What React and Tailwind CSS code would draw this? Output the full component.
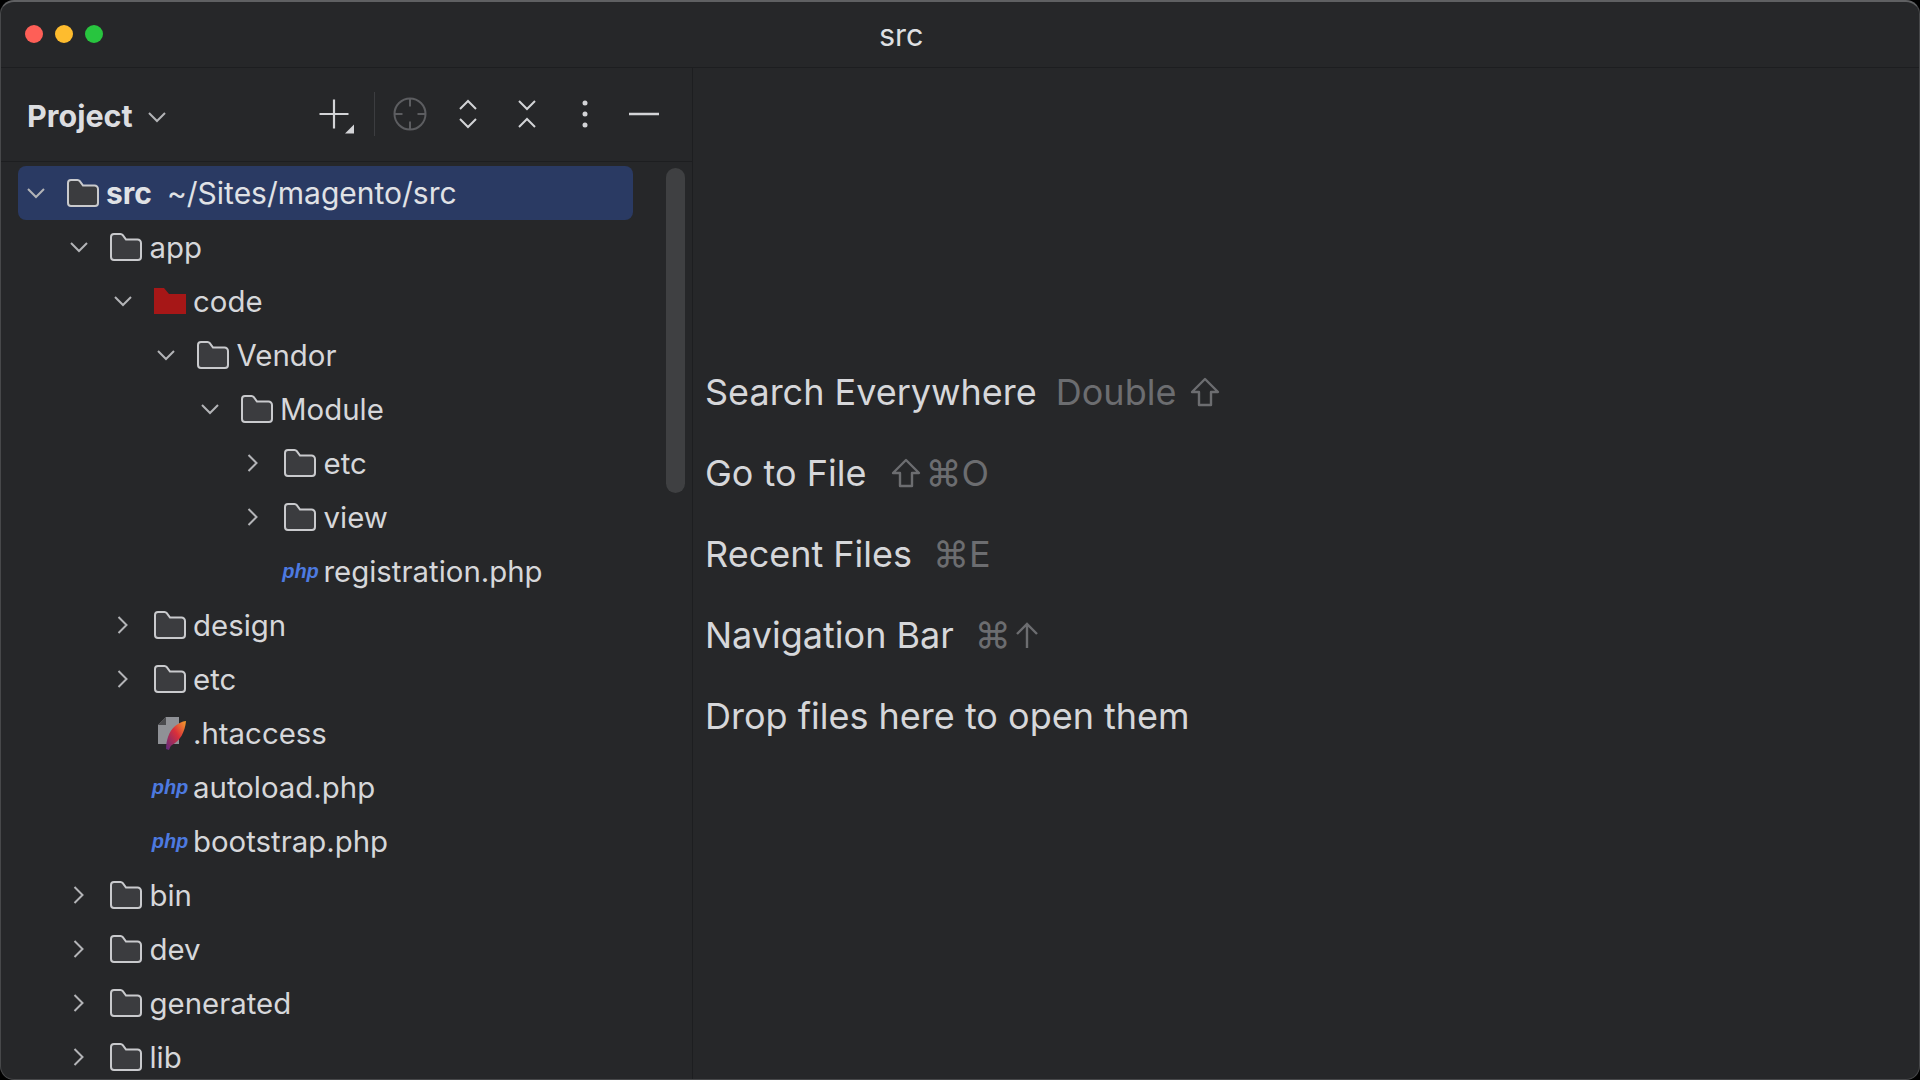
const Chevron = ({ open }) =>
  open ? (
    <svg width="20" height="12" viewBox="0 0 20 12" fill="none" stroke="#b3b4b7" strokeWidth="2">
      <path d="M2 2l8 8 8-8" />
    </svg>
  ) : (
    <svg className="-ml-[2px]" width="12" height="20" viewBox="0 0 12 20" fill="none" stroke="#b3b4b7" strokeWidth="2">
      <path d="M2.5 2l8 8-8 8" />
    </svg>
  );

const Folder = ({ red }) =>
  red ? (
    <svg width="32" height="28" viewBox="0 0 32 28">
      <path d="M0 1h10l5 6h17v20H0z" fill="#a61717" />
    </svg>
  ) : (
    <svg className="-ml-[1px]" width="32" height="28" viewBox="0 0 32 28">
      <path
        d="M4 1h6.5c1 0 1.700.4 2.300 1.200L16 6.500h11.500A3.500 3.500 0 0 1 31 10v14a3 3 0 0 1-3 3H4a3 3 0 0 1-3-3V4a3 3 0 0 1 3-3z"
        fill="#3b3c3f"
        stroke="#c9cacd"
        strokeWidth="2"
      />
    </svg>
  );

const Php = () => (
  <span className="mb-[1px] font-['Liberation_Sans'] text-[20px] leading-none font-bold italic text-[#4d7ae0]">
    php
  </span>
);

const Feather = () => (
  <svg width="32" height="34" viewBox="0 0 32 34">
    <defs>
      <linearGradient id="feather" x1="1" y1="0" x2="0" y2="1">
        <stop offset="0" stopColor="#f4a02c" />
        <stop offset="0.45" stopColor="#d92f3a" />
        <stop offset="1" stopColor="#5d2a82" />
      </linearGradient>
    </defs>
    <path d="M12 1h13v27H4V9z" fill="#8f9196" />
    <path d="M12 1v8H4z" fill="#4a4b4e" />
    <path d="M32 5c-8 1-15 7-18 16-1 3-2 7-2 12l3 1c1-2 1-4 3-5 8-4 13-13 14-24z" fill="url(#feather)" />
  </svg>
);

const depthClass = [
  "pl-0",
  "pl-[43.500px]",
  "pl-[87px]",
  "pl-[130.500px]",
  "pl-[174px]",
  "pl-[217.500px]",
];

const tree = [
  { depth: 0, name: "src", open: true, selected: true },
  { depth: 1, name: "app", open: true },
  { depth: 2, name: "code", open: true, icon: "red" },
  { depth: 3, name: "Vendor", open: true },
  { depth: 4, name: "Module", open: true },
  { depth: 5, name: "etc" },
  { depth: 5, name: "view" },
  { depth: 5, name: "registration.php", icon: "php" },
  { depth: 2, name: "design" },
  { depth: 2, name: "etc" },
  { depth: 2, name: ".htaccess", icon: "apache" },
  { depth: 2, name: "autoload.php", icon: "php" },
  { depth: 2, name: "bootstrap.php", icon: "php" },
  { depth: 1, name: "bin" },
  { depth: 1, name: "dev" },
  { depth: 1, name: "generated" },
  { depth: 1, name: "lib" },
];

const TreeRow = ({ item }) => {
  const isFile = item.icon === "php" || item.icon === "apache";
  return (
    <div
      className={`flex h-[54px] items-center shrink-0 rounded-lg whitespace-nowrap ${depthClass[item.depth]} ${
        item.selected ? "bg-[#2a3a63] text-[30px] text-[#e0e2e6]" : "text-[29.400px] text-[#d6d7da]"
      }`}
    >
      <span className="flex w-[35px] justify-center">{!isFile && <Chevron open={item.open} />}</span>
      <span className="ml-[14px] flex w-[32px] justify-center">
        {item.icon === "php" && <Php />}
        {item.icon === "apache" && <Feather />}
        {!isFile && <Folder red={item.icon === "red"} />}
      </span>
      <span className={`ml-[7px] ${item.selected ? "pt-[1px] font-bold" : "pt-[2px]"}`}>{item.name}</span>
      {item.selected && <span className="ml-[15px] pt-[1px]">~/Sites/magento/src</span>}
    </div>
  );
};

const ToolBtn = ({ children }) => (
  <button className="flex h-[40px] w-[58.500px] items-center justify-center">{children}</button>
);

const Toolbar = () => (
  <div className="flex h-[94px] items-center border-b border-[#1d1e20] pl-[26px] pr-[19px]">
    <span className="mt-[3px] text-[30.500px] font-bold text-[#dcdde0]">Project</span>
    <svg className="ml-[14px] mt-[5px]" width="20" height="12" viewBox="0 0 20 12" fill="none" stroke="#b3b4b7" strokeWidth="2">
      <path d="M2 2l8 8 8-8" />
    </svg>
    <div className="-mt-[2px] ml-auto flex items-center">
      <button className="flex h-[40px] w-[40px] items-center justify-center">
        <svg width="40" height="40" viewBox="0 0 40 40">
          <path d="M5.500 20h29M20 5.500v29" stroke="#d3d4d7" strokeWidth="2.200" fill="none" />
          <path d="M40 30.500v9h-9z" fill="#d3d4d7" />
        </svg>
      </button>
      <span className="ml-[20px] mr-[6px] h-[44px] w-px bg-[#3c3d40]" />
      <ToolBtn>
        <svg width="34" height="34" viewBox="0 0 34 34" fill="none" stroke="#5c5d60" strokeWidth="2">
          <circle cx="17" cy="17" r="15.500" />
          <path d="M17 1.500v8M17 24.500v8M1.500 17h8M24.500 17h8" />
        </svg>
      </ToolBtn>
      <ToolBtn>
        <svg width="20" height="30" viewBox="0 0 20 30" fill="none" stroke="#d3d4d7" strokeWidth="2">
          <path d="M2 10l8-8 8 8M2 20l8 8 8-8" />
        </svg>
      </ToolBtn>
      <ToolBtn>
        <svg width="20" height="30" viewBox="0 0 20 30" fill="none" stroke="#d3d4d7" strokeWidth="2">
          <path d="M2 2l8 8 8-8M2 28l8-8 8 8" />
        </svg>
      </ToolBtn>
      <ToolBtn>
        <svg width="6" height="28" viewBox="0 0 6 28" fill="#d3d4d7">
          <circle cx="3" cy="3" r="2.500" />
          <circle cx="3" cy="14" r="2.500" />
          <circle cx="3" cy="25" r="2.500" />
        </svg>
      </ToolBtn>
      <ToolBtn>
        <svg width="30" height="4" viewBox="0 0 30 4">
          <path d="M0 2h30" stroke="#d3d4d7" strokeWidth="2.400" />
        </svg>
      </ToolBtn>
    </div>
  </div>
);

const ShiftKey = () => (
  <svg className="ml-[4px]" width="30" height="30" viewBox="0 0 30 30" fill="none" stroke="#6c6d70" strokeWidth="2.400" strokeLinejoin="round">
    <path d="M15 2L28 15h-7v13H9V15H2z" />
  </svg>
);

const UpKey = () => (
  <svg width="24" height="28" viewBox="0 0 24 28" fill="none" stroke="#6c6d70" strokeWidth="2.400">
    <path d="M12 27V3M2 13L12 3l10 10" />
  </svg>
);

const Hint = ({ label, children }) => (
  <div className="flex h-[81px] items-center text-[#d6d7da]">
    <span>{label}</span>
    {children && <span className="ml-[21px] flex items-center gap-[4px] text-[#6c6d70]">{children}</span>}
  </div>
);

const App = () => (
  <div className="h-[1080px] w-[1920px] overflow-hidden bg-black font-['Inter',sans-serif]">
    <div className="flex h-[1080px] flex-col overflow-hidden rounded-[14px] border border-[#47484a] border-t-2 border-t-[#5f6062] bg-[#262729]">
      <div className="flex h-[66px] shrink-0 items-center border-b border-[#1d1e20] pl-[24px]">
        <div className="mb-[2px] flex gap-[12px]">
          <span className="h-[18px] w-[18px] rounded-full bg-[#fe5f57]" />
          <span className="h-[18px] w-[18px] rounded-full bg-[#febc2e]" />
          <span className="h-[18px] w-[18px] rounded-full bg-[#28c53f]" />
        </div>
        <span className="ml-[776px] pt-[1px] text-[30.500px] text-[#dfe0e3]">src</span>
      </div>
      <div className="flex min-h-0 flex-1">
        <div className="w-[692px] shrink-0 border-r border-[#1d1e20]">
          <Toolbar />
          <div className="flex pl-[17px] pt-[4px]">
            <div className="flex w-[615px] flex-col">
              {tree.map((item, i) => (
                <TreeRow key={i} item={item} />
              ))}
            </div>
            <div className="ml-[33px] mt-[2px] h-[325px] w-[19px] rounded-full bg-[#3f4042]" />
          </div>
        </div>
        <div className="flex-1 pl-[12px] pt-[283px] text-[36px]">
          <Hint label="Search Everywhere">
            <span className="-ml-[2px] mr-[6px]">Double</span>
            <ShiftKey />
          </Hint>
          <Hint label="Go to File">
            <ShiftKey />
            <span>⌘O</span>
          </Hint>
          <Hint label="Recent Files">
            <span>⌘E</span>
          </Hint>
          <Hint label="Navigation Bar">
            <span>⌘</span>
            <UpKey />
          </Hint>
          <Hint label="Drop files here to open them" />
        </div>
      </div>
    </div>
  </div>
);

export default App;
